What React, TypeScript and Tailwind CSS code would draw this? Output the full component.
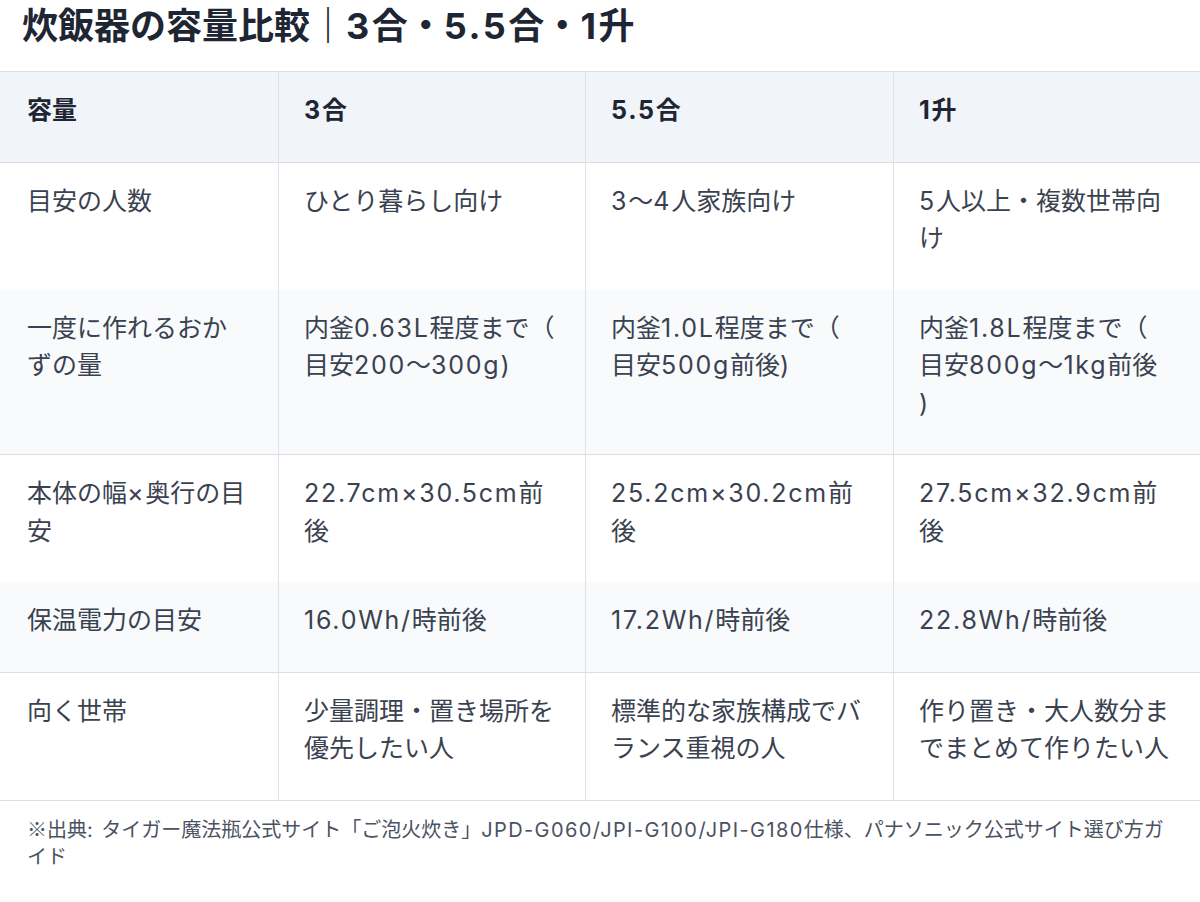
const font = '"Inter", "Noto Sans CJK JP", sans-serif';

type Row = {
  cells: string[][];
  striped?: boolean;
  border?: boolean;
};

const rows: Row[] = [
  {
    cells: [['目安の人数'], ['ひとり暮らし向け'], ['3〜4人家族向け'], ['5人以上・複数世帯向', 'け']],
  },
  {
    striped: true,
    border: true,
    cells: [
      ['一度に作れるおか', 'ずの量'],
      ['内釜0.63L程度まで（', '目安200〜300g)'],
      ['内釜1.0L程度まで（', '目安500g前後)'],
      ['内釜1.8L程度まで（', '目安800g〜1kg前後', ')'],
    ],
  },
  {
    cells: [
      ['本体の幅×奥行の目', '安'],
      ['22.7cm×30.5cm前', '後'],
      ['25.2cm×30.2cm前', '後'],
      ['27.5cm×32.9cm前', '後'],
    ],
  },
  {
    striped: true,
    border: true,
    cells: [['保温電力の目安'], ['16.0Wh/時前後'], ['17.2Wh/時前後'], ['22.8Wh/時前後']],
  },
  {
    border: true,
    cells: [
      ['向く世帯'],
      ['少量調理・置き場所を', '優先したい人'],
      ['標準的な家族構成でバ', 'ランス重視の人'],
      ['作り置き・大人数分ま', 'でまとめて作りたい人'],
    ],
  },
];

const grid = 'grid grid-cols-[278px_307px_308px_307px]';

// latin runs get a little extra tracking, CJK falls back through the stack
function Txt({ s }: { s: string }) {
  const parts = s.split(/([\x20-\x7E×]+)/).filter(Boolean);
  return (
    <>
      {parts.map((p, i) =>
        /^[\x20-\x7E×]+$/.test(p) ? (
          <span key={i} className="tracking-[0.07em]">
            {p}
          </span>
        ) : (
          p
        ),
      )}
    </>
  );
}

function Lines({ lines }: { lines: string[] }) {
  return (
    <>
      {lines.map((l, i) => (
        <span key={i} className="block whitespace-nowrap">
          <Txt s={l} />
        </span>
      ))}
    </>
  );
}

export default function App() {
  return (
    <div className="min-h-[902px] w-[1200px] bg-white" style={{ fontFamily: font }}>
      <h1 className="mt-[5px] mb-[24px] pl-[22px] text-[36px] font-bold leading-[42px] text-[#1f2633] whitespace-nowrap">
        <Txt s="炊飯器の容量比較｜3合・5.5合・1升" />
      </h1>

      <div className="border-t border-[#dadee4]">
        <div className={`${grid} border-b border-[#dadee4] bg-[#f1f4f8]`}>
          {['容量', '3合', '5.5合', '1升'].map((h, i) => (
            <div
              key={h}
              className={`pt-[20px] pb-[32px] pr-[20px] text-[25px] font-bold leading-[37.5px] text-[#1f2633] ${
                i > 0 ? 'border-l border-[#dfe3e8] pl-[25px]' : 'pl-[27px]'
              }`}
            >
              <Txt s={h} />
            </div>
          ))}
        </div>

        {rows.map((row, r) => (
          <div
            key={r}
            className={`${grid} ${row.striped ? 'bg-[#f8fafc]' : 'bg-white'} ${
              row.border ? 'border-b border-[#dadee4]' : ''
            }`}
          >
            {row.cells.map((c, i) => (
              <div
                key={i}
                className={`pt-[20px] pb-[32px] pr-[20px] text-[25px] leading-[37.5px] text-[#3a4250] ${
                  i > 0 ? 'border-l border-[#dfe3e8] pl-[25px]' : 'pl-[27px]'
                }`}
              >
                <Lines lines={c} />
              </div>
            ))}
          </div>
        ))}
      </div>

      <p className="mt-[13px] pl-[27px] text-[20px] leading-[29px] text-[#4b5261]">
        <span className="block h-[29px] whitespace-nowrap">
          <span className="inline-block leading-[29px]" style={{ fontFamily: '"Noto Sans CJK JP", sans-serif' }}>
            ※
          </span>
          <Txt s="出典: タイガー魔法瓶公式サイト「ご泡火炊き」JPD-G060/JPI-G100/JPI-G180仕様、パナソニック公式サイト選び方ガ" />
        </span>
        <span className="block">イド</span>
      </p>
    </div>
  );
}
